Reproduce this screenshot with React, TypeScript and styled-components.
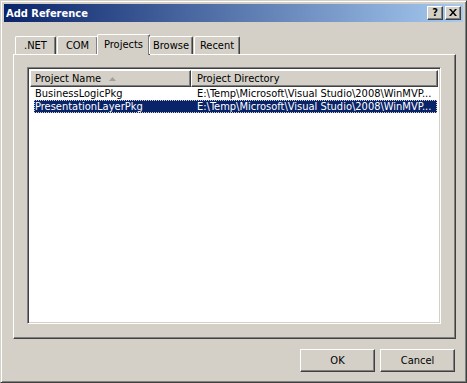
import React from "react";
import styled, { createGlobalStyle } from "styled-components";

const face = "#D4D0C8";
const shadow = "#808080";
const darkShadow = "#404040";
const highlight = "#0A246A";

const GlobalStyle = createGlobalStyle`
	html, body {
		margin: 0;
		padding: 0;
		background: ${face};
	}
	* {
		box-sizing: border-box;
	}
`;

const Window = styled.div`
	width: 467px;
	height: 383px;
	display: flex;
	flex-direction: column;
	background: ${face};
	border: 1px solid;
	border-color: ${face} ${darkShadow} ${darkShadow} ${face};
	box-shadow: inset 1px 1px #fff, inset -1px -1px ${shadow};
	padding: 3px;
	font-family: "DejaVu Sans Condensed", "DejaVu Sans", sans-serif;
	font-size: 11px;
	color: #000;
`;

const TitleBar = styled.div`
	height: 18px;
	display: flex;
	align-items: center;
	padding: 0 2px 0 2px;
	background: linear-gradient(to right, #0a246a, #a6caf0);
`;

const Title = styled.div`
	flex: 1;
	color: #fff;
	font-weight: bold;
	font-size: 11px;
`;

const CaptionButton = styled.div<{ $gap?: number }>`
	width: 16px;
	height: 14px;
	margin-left: ${(p) => p.$gap ?? 0}px;
	display: flex;
	align-items: center;
	justify-content: center;
	background: ${face};
	border: 1px solid;
	border-color: #fff ${darkShadow} ${darkShadow} #fff;
	box-shadow: inset -1px -1px ${shadow};
	font-weight: bold;
	font-size: 11px;
	line-height: 1;
	padding-bottom: 1px;
`;

const Body = styled.div`
	flex: 1;
	display: flex;
	flex-direction: column;
	padding: 11px 0 0 9px;
`;

const TabStrip = styled.div`
	display: flex;
	align-items: flex-end;
	height: 21px;
	padding-left: 2px;
	position: relative;
	z-index: 1;
`;

const Tab = styled.div<{ $w: number; $active?: boolean }>`
	width: ${(p) => (p.$active ? p.$w + 4 : p.$w)}px;
	height: ${(p) => (p.$active ? 21 : 18)}px;
	margin: ${(p) => (p.$active ? "0 -1px -1px -2px" : "0 1px 0 0")};
	display: flex;
	align-items: ${(p) => (p.$active ? "flex-start" : "center")};
	padding-top: ${(p) => (p.$active ? "3px" : "0")};
	justify-content: center;
	background: ${face};
	border-top: 1px solid #fff;
	border-left: 1px solid #fff;
	border-right: 1px solid ${darkShadow};
	border-radius: 2px 2px 0 0;
	box-shadow: inset -1px 0 ${shadow};
`;

const Panel = styled.div`
	width: 443px;
	height: 285px;
	padding: 12px 0 0 13px;
	border: 1px solid;
	border-color: #fff ${darkShadow} ${darkShadow} #fff;
	box-shadow: inset -1px -1px ${shadow};
`;

const ListView = styled.div`
	width: 414px;
	height: 257px;
	background: #fff;
	border: 1px solid;
	border-color: ${shadow} #fff #fff ${shadow};
	box-shadow: inset 1px 1px ${darkShadow}, inset -1px -1px ${face};
	padding: 2px;
	display: flex;
	flex-direction: column;
`;

const HeaderRow = styled.div`
	display: flex;
	height: 17px;
`;

const HeaderCell = styled.div<{ $w?: number; $pad: number }>`
	${(p) => (p.$w ? `width: ${p.$w}px;` : "flex: 1;")}
	display: flex;
	align-items: center;
	padding-left: ${(p) => p.$pad}px;
	background: ${face};
	border: 1px solid;
	border-color: #fff ${darkShadow} ${darkShadow} #fff;
	box-shadow: inset -1px -1px ${shadow};
	white-space: nowrap;
	overflow: hidden;
`;

const SortArrow = styled.svg`
	margin-left: 8px;
`;

const Row = styled.div<{ $selected?: boolean }>`
	display: flex;
	height: 13px;
	line-height: 13px;
	margin-left: 4px;
	margin-right: 1px;
	background: ${(p) => (p.$selected ? highlight : "transparent")};
	color: ${(p) => (p.$selected ? "#fff" : "#000")};
	outline: ${(p) => (p.$selected ? `1px dotted ${face}` : "none")};
	outline-offset: -1px;
	white-space: nowrap;
`;

const NameCell = styled.div`
	width: 157px;
	padding-left: 1px;
`;

const DirCell = styled.div`
	flex: 1;
	padding-left: 6px;
`;

const Footer = styled.div`
	display: flex;
	justify-content: flex-end;
	gap: 5px;
	padding: 10px 8px 0 0;
`;

const Button = styled.div`
	width: 75px;
	height: 23px;
	display: flex;
	align-items: center;
	justify-content: center;
	border: 1px solid;
	border-color: #fff ${darkShadow} ${darkShadow} #fff;
	box-shadow: inset -1px -1px ${shadow};
`;

const tabs = [
	{ label: ".NET", w: 41 },
	{ label: "COM", w: 41 },
	{ label: "Projects", w: 49, active: true },
	{ label: "Browse", w: 44 },
	{ label: "Recent", w: 46 },
];

const rows = [
	{ name: "BusinessLogicPkg", dir: "E:\\Temp\\Microsoft\\Visual Studio\\2008\\WinMVP..." },
	{ name: "PresentationLayerPkg", dir: "E:\\Temp\\Microsoft\\Visual Studio\\2008\\WinMVP...", selected: true },
];

export default function App() {
	return (
		<>
			<GlobalStyle />
			<Window>
				<TitleBar>
					<Title>Add Reference</Title>
					<CaptionButton>?</CaptionButton>
					<CaptionButton $gap={2}>
						<svg width="8" height="7" viewBox="0 0 8 7">
							<path d="M0 0h2l2 2.5 2-2.5h2l-3 3.5 3 3.5h-2l-2-2.5-2 2.5h-2l3-3.5z" fill="#000" />
						</svg>
					</CaptionButton>
				</TitleBar>
				<Body>
					<TabStrip>
						{tabs.map((t) => (
							<Tab key={t.label} $w={t.w} $active={t.active}>
								{t.label}
							</Tab>
						))}
					</TabStrip>
					<Panel>
						<ListView>
							<HeaderRow>
								<HeaderCell $w={161} $pad={4}>
									Project Name
									<SortArrow width="7" height="4" viewBox="0 0 7 4">
										<path d="M3.5 0L7 4H0z" fill="#A0A0A0" />
									</SortArrow>
								</HeaderCell>
								<HeaderCell $pad={5}>Project Directory</HeaderCell>
							</HeaderRow>
							{rows.map((r) => (
								<Row key={r.name} $selected={r.selected}>
									<NameCell>{r.name}</NameCell>
									<DirCell>{r.dir}</DirCell>
								</Row>
							))}
						</ListView>
					</Panel>
					<Footer>
						<Button>OK</Button>
						<Button>Cancel</Button>
					</Footer>
				</Body>
			</Window>
		</>
	);
}
